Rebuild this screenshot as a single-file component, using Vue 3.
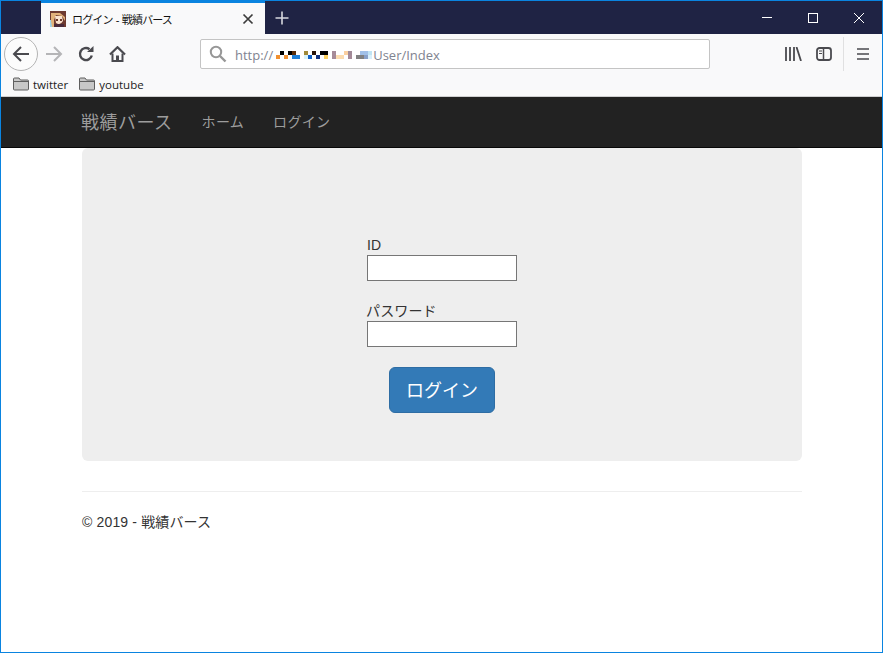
<template>
  <div class="window">
    <div class="titlebar">
      <div class="tab">
        <svg class="favicon" width="16" height="16" viewBox="0 0 16 16">
          <rect width="16" height="16" fill="#6e3a30" />
          <rect x="0" y="9" width="3" height="7" fill="#9fd3e8" />
          <path d="M1 2 H10 L15 6 V10 L12 5 L6 4 L4 9 L4 16 H2 L1 10 Z" fill="#e2b27a" />
          <path d="M5 5 H12 L13 10 Q10 15 6 12 Z" fill="#fbe3cf" />
          <rect x="6" y="8" width="2" height="2" fill="#6b3a2a" />
          <rect x="10" y="8" width="2" height="2" fill="#6b3a2a" />
          <rect x="4" y="13" width="10" height="3" fill="#4a2a3a" />
        </svg>
        <span class="tab-title">ログイン - 戦績バース</span>
        <svg class="tab-close" width="12" height="12" viewBox="0 0 12 12">
          <path d="M1.5 1.5 L10.5 10.5 M10.5 1.5 L1.5 10.5" stroke="#3c3c3c" stroke-width="1.7" />
        </svg>
      </div>
      <svg class="new-tab" width="14" height="14" viewBox="0 0 14 14">
        <path d="M7 0.5 V13.5 M0.5 7 H13.5" stroke="#d6d7de" stroke-width="1.6" />
      </svg>
      <div class="win-controls">
        <svg class="win-btn" width="46" height="12" viewBox="0 0 46 12"><path d="M18 5.5 H28" stroke="#fff" stroke-width="1" /></svg>
        <svg class="win-btn" width="46" height="12" viewBox="0 0 46 12"><rect x="18.5" y="1.5" width="9" height="9" fill="none" stroke="#fff" stroke-width="1" /></svg>
        <svg class="win-btn" width="46" height="12" viewBox="0 0 46 12"><path d="M18 1 L28 11 M28 1 L18 11" stroke="#fff" stroke-width="1" /></svg>
      </div>
    </div>

    <div class="toolbar">
      <div class="back-btn">
        <svg width="18" height="16" viewBox="0 0 18 16">
          <path d="M9 1 L2 8 L9 15 M2 8 H17" fill="none" stroke="#4a4a4f" stroke-width="2" />
        </svg>
      </div>
      <svg class="forward" width="18" height="16" viewBox="0 0 18 16">
        <path d="M9 1 L16 8 L9 15 M16 8 H1" fill="none" stroke="#b5b5b7" stroke-width="2" />
      </svg>
      <svg class="reload" width="16" height="16" viewBox="0 0 16 16">
        <path d="M13.8 9.5 A6 6 0 1 1 11.5 3.2" fill="none" stroke="#4a4a4f" stroke-width="2.4" />
        <path d="M9 6 H15.5 V0 Z" fill="#4a4a4f" />
      </svg>
      <svg class="home" width="17" height="16" viewBox="0 0 17 16">
        <path d="M1 8.5 L8.5 1.2 L16 8.5" fill="none" stroke="#4a4a4f" stroke-width="2.2" />
        <path d="M3.5 7.5 V15 H13.5 V7.5" fill="none" stroke="#4a4a4f" stroke-width="2" />
        <rect x="7" y="9.5" width="3" height="5" fill="#4a4a4f" />
      </svg>
      <div class="urlbar">
        <svg class="search" width="18" height="18" viewBox="0 0 18 18">
          <circle cx="7" cy="7" r="5.2" fill="none" stroke="#979797" stroke-width="2" />
          <path d="M11 11 L16.5 16.5" stroke="#979797" stroke-width="2.4" />
        </svg>
        <span class="url">http://</span>
        <div class="mosaic">
          <i v-for="(c, i) in mosaic" :key="i" :style="{ background: c }"></i>
        </div>
        <span class="url url-path">User/Index</span>
      </div>
      <div class="tool-right">
        <svg width="17" height="14" viewBox="0 0 17 14">
          <path d="M1 0 V14 M5 0 V14 M9 0 V14 M11.5 0 L16 14" fill="none" stroke="#4a4a4f" stroke-width="1.8" />
        </svg>
        <svg class="sidebar" width="16" height="14" viewBox="0 0 16 14">
          <rect x="1" y="1" width="14" height="12" rx="2.5" fill="none" stroke="#4a4a4f" stroke-width="1.8" />
          <path d="M7.5 1 V13" stroke="#4a4a4f" stroke-width="1.5" />
          <path d="M3 4 H6 M3 6.5 H6" stroke="#4a4a4f" stroke-width="1" />
        </svg>
        <span class="tool-sep"></span>
        <svg class="menu" width="12" height="12" viewBox="0 0 12 12">
          <path d="M0 1 H12 M0 6 H12 M0 11 H12" stroke="#4a4a4f" stroke-width="1.7" />
        </svg>
      </div>
    </div>

    <div class="bookmarks">
      <div v-for="b in bookmarks" :key="b" class="bookmark">
        <svg width="16" height="14" viewBox="0 0 16 14">
          <path d="M0.5 12 V2 Q0.5 1 1.5 1 H6 L7.5 3 H14.5 Q15.5 3 15.5 4 V12 Q15.5 13 14.5 13 H1.5 Q0.5 13 0.5 12 Z" fill="#c8c8c8" stroke="#5f5f5f" stroke-width="1" />
          <path d="M1 4.5 H15" stroke="#5f5f5f" stroke-width="1" />
        </svg>
        <span>{{ b }}</span>
      </div>
    </div>

    <nav class="navbar">
      <div class="container nav-inner">
        <a class="brand">戦績バース</a>
        <a class="nav-link">ホーム</a>
        <a class="nav-link">ログイン</a>
      </div>
    </nav>

    <main class="container">
      <form class="jumbotron" @submit.prevent>
        <div class="form-group">
          <label for="login-id">ID</label>
          <input id="login-id" type="text" />
        </div>
        <div class="form-group">
          <label class="label-pw" for="login-pw">パスワード</label>
          <input id="login-pw" type="password" />
        </div>
        <button class="btn-primary" type="submit">ログイン</button>
      </form>
      <hr />
      <footer>© 2019 - 戦績バース</footer>
    </main>
  </div>
</template>

<script setup>
const bookmarks = ['twitter', 'youtube']

// 隠されたホスト名のモザイク (2段 x 24列)
const top = ['#fff','#000','#fff','#000','#5c2e0a','#fff','#fff','#a08a3a','#fff','#2a1408','#fff','#000','#000','#fff','#a68a98','#fff','#fff','#fbd0a0','#a08a98','#fff','#fff','#a0c0e8','#a0c0e8','#c0e4f4']
const bottom = ['#f09030','#fff','#f09030','#fff','#2080d8','#2080d8','#fff','#d8f4fc','#1060c8','#fff','#103080','#fff','#fcd060','#fff','#a68a98','#fcdcb0','#fcdcb0','#fff','#a68a98','#fff','#808080','#808080','#88a0c8','#d8f0fc']
const mosaic = [...top, ...bottom]
</script>

<style>
html, body { margin: 0; background: #fff; }
</style>

<style scoped>
* { box-sizing: border-box; }

.window {
  width: 883px;
  height: 653px;
  border: 1px solid #0a84e0;
  background: #fff;
  overflow: hidden;
  font-family: "Liberation Sans", "Noto Sans CJK JP", sans-serif;
  color: #333;
}

.titlebar {
  height: 33px;
  background: #1f2344;
  display: flex;
  align-items: center;
  padding-left: 40px;
}

.tab {
  width: 224px;
  height: 33px;
  background: #f9f9fa;
  border-top: 2px solid #0a84e0;
  display: flex;
  align-items: center;
  padding: 0 11px 0 9px;
}
.favicon { flex: none; }
.tab-title {
  margin-left: 6px;
  font-size: 11px;
  letter-spacing: -0.85px;
  word-spacing: 1px;
  color: #111;
  flex: 1;
  white-space: nowrap;
}
.new-tab { margin-left: 10px; }

.win-controls { margin-left: auto; display: flex; align-items: center; }
.win-btn { display: block; }

.toolbar {
  height: 42px;
  background: #f9f9fa;
  display: flex;
  align-items: center;
  padding: 0 0 2px 3px;
}
.back-btn {
  width: 34px;
  height: 34px;
  border: 1px solid #b4b4b4;
  border-radius: 50%;
  background: #fcfcfc;
  display: flex;
  align-items: center;
  justify-content: center;
}
.forward { margin-left: 7px; }
.reload { margin-left: 15px; }
.home { margin-left: 15px; }

.urlbar {
  margin-left: 74px;
  width: 510px;
  height: 30px;
  background: #fff;
  border: 1px solid #c4c4c4;
  border-radius: 2px;
  display: flex;
  align-items: center;
  padding-left: 8px;
}
.search { margin-right: 8px; }
.url {
  font-family: "Open Sans", "Liberation Sans", sans-serif;
  font-size: 13px;
  color: #7f8390;
  padding-top: 2px;
}
.url-path { margin-left: 1px; }
.mosaic {
  display: grid;
  grid-template-columns: repeat(24, 4px);
  grid-auto-rows: 4px;
  margin: 2px 0 0 3px;
}
.mosaic i { display: block; }

.tool-right {
  margin-left: 75px;
  display: flex;
  align-items: center;
}
.sidebar { margin-left: 14px; }
.tool-sep {
  width: 1px;
  height: 34px;
  background: #e0e0e1;
  margin-left: 11px;
}
.menu { margin-left: 13px; }

.bookmarks {
  height: 21px;
  background: #f9f9fa;
  border-bottom: 1px solid #cfcfd0;
  display: flex;
  align-items: center;
  padding: 0 0 4px 12px;
  gap: 11px;
}
.bookmark {
  display: flex;
  align-items: center;
  gap: 4px;
  font-family: "Open Sans", "Liberation Sans", sans-serif;
  font-size: 11.5px;
  color: #222;
}

.container {
  width: 720px;
  margin-left: 81px;
}

.navbar {
  height: 51px;
  background: #222;
  border-bottom: 1px solid #080808;
}
.nav-inner {
  height: 100%;
  display: flex;
  align-items: center;
  padding-bottom: 3px;
}
.brand {
  font-size: 18px;
  letter-spacing: 0.5px;
  color: #9d9d9d;
  margin-left: -1px;
}
.nav-link {
  font-size: 14px;
  letter-spacing: 0.3px;
  color: #9d9d9d;
}
.brand + .nav-link { margin-left: 29px; }
.nav-link + .nav-link { margin-left: 29px; }

.jumbotron {
  height: 313px;
  background: #eee;
  border-radius: 6px;
  display: flex;
  flex-direction: column;
  align-items: center;
  padding-top: 89px;
}
.form-group {
  display: flex;
  flex-direction: column;
  width: 150px;
}
.form-group + .form-group { margin-top: 22px; }
.form-group label {
  font-size: 14px;
  line-height: 17px;
  height: 18px;
  white-space: nowrap;
}
.form-group .label-pw { margin-left: -1px; letter-spacing: 0.15px; }
.form-group input {
  width: 150px;
  height: 26px;
  border: 1px solid #767676;
  background: #fff;
  padding: 1px 2px;
  outline: none;
}
.btn-primary {
  width: 106px;
  height: 46px;
  margin-top: 20px;
  padding: 0 0 2px;
  background: #337ab7;
  border: 1px solid #2e6da4;
  border-radius: 6px;
  color: #fff;
  font-family: inherit;
  font-size: 18px;
  cursor: pointer;
}

hr {
  margin: 30px 0 0;
  border: 0;
  border-top: 1px solid #eee;
}
footer {
  margin-top: 22px;
  font-size: 14px;
  line-height: 17px;
  letter-spacing: 0.15px;
}
</style>
